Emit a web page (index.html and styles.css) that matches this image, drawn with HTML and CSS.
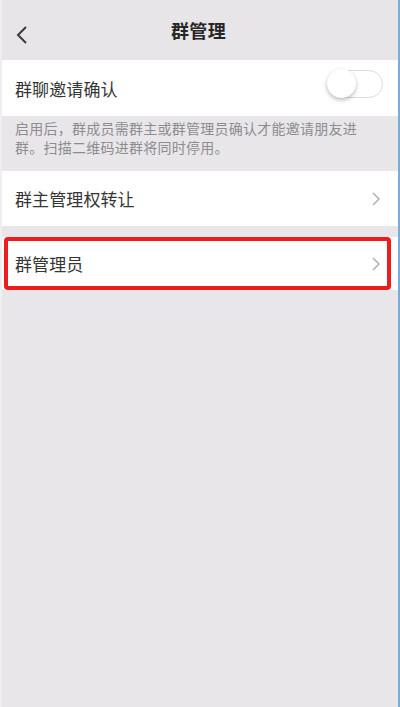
FILE: index.html
```html
<!DOCTYPE html>
<html lang="zh">
<head>
<meta charset="utf-8">
<title>群管理</title>
<link rel="stylesheet" href="styles.css">
</head>
<body>
<div class="page">
  <header class="header">
    <span class="back">
      <svg width="13" height="20" viewBox="0 0 13 20"><path d="M11 2 L3 10 L11 18" fill="none" stroke="#3a3a3a" stroke-width="2"/></svg>
    </span>
    <h1 class="title">群管理</h1>
  </header>
  <div class="row row-first">
    <span class="label">群聊邀请确认</span>
    <span class="toggle"><span class="knob"></span></span>
  </div>
  <p class="desc">启用后，群成员需群主或群管理员确认才能邀请朋友进群。扫描二维码进群将同时停用。</p>
  <div class="row row-second">
    <span class="label">群主管理权转让</span>
    <svg class="chev" width="10" height="16" viewBox="0 0 10 16"><path d="M2 2 L8 8 L2 14" fill="none" stroke="#b4b4b6" stroke-width="1.6"/></svg>
  </div>
  <div class="row row-third">
    <span class="label">群管理员</span>
    <svg class="chev" width="10" height="16" viewBox="0 0 10 16"><path d="M2 2 L8 8 L2 14" fill="none" stroke="#b4b4b6" stroke-width="1.6"/></svg>
    <span class="highlight"></span>
  </div>
</div>
</body>
</html>
```

FILE: styles.css
```css
html, body {
  margin: 0;
  padding: 0;
}
body {
  background: #e8e6e9;
  font-family: "Noto Sans CJK SC", "Noto Sans", sans-serif;
}
.page {
  width: 400px;
  height: 707px;
  box-sizing: border-box;
  background: #e8e6e9;
  border-left: 2px solid #efeef0;
  border-right: 2px solid #78acdc;
  position: relative;
}
.header {
  height: 60px;
  background: #e7e5e8;
  display: flex;
  align-items: center;
  justify-content: center;
  position: relative;
}
.back {
  position: absolute;
  left: 13px;
  top: 25px;
  display: flex;
}
.title {
  margin: 0 0 0 -3px;
  font-size: 18px;
  font-weight: 700;
  color: #262626;
  letter-spacing: 0.3px;
}
.row {
  background: #ffffff;
  display: flex;
  align-items: center;
  justify-content: space-between;
  padding: 0 17px 0 13px;
  position: relative;
}
.row-first {
  height: 56px;
  padding-right: 15px;
}
.row-second {
  height: 55px;
}
.row-third {
  height: 53px;
  margin-top: 11px;
}
.label {
  font-size: 17px;
  color: #353535;
  letter-spacing: 0.1px;
}
.toggle {
  width: 56px;
  height: 28px;
  box-sizing: border-box;
  border: 1.5px solid #dddddd;
  border-radius: 14px;
  background: #fff;
  position: relative;
  margin-top: -8px;
}
.knob {
  position: absolute;
  left: -1.5px;
  top: -2px;
  width: 29px;
  height: 29px;
  border-radius: 50%;
  background: #fff;
  box-shadow: 0 2px 4px rgba(0,0,0,0.28);
}
.desc {
  margin: 0;
  padding: 3px 30px 14px 13px;
  font-size: 14px;
  line-height: 19px;
  letter-spacing: 0.25px;
  color: #8d8c8f;
}
.chev {
  display: block;
}
.highlight {
  position: absolute;
  left: 2px;
  top: 0;
  width: 387px;
  height: 53px;
  box-sizing: border-box;
  border: 4px solid #ee1c1c;
  border-radius: 4px;
}
```
